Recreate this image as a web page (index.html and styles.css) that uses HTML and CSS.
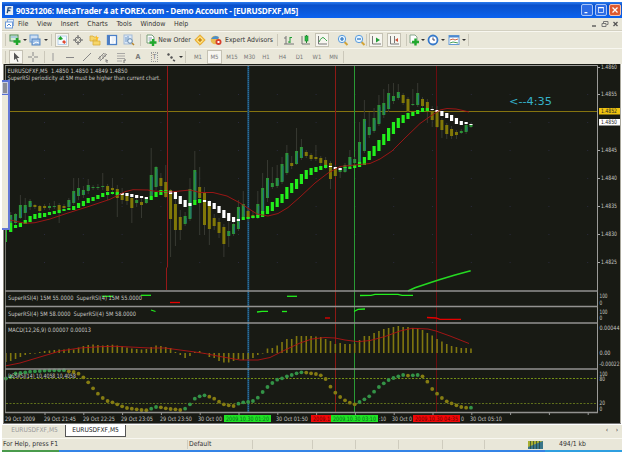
FILE: index.html
```
<!DOCTYPE html>
<html lang="en">
<head>
  <meta charset="UTF-8">
  <title>90321206: MetaTrader 4 at FOREX.com</title>
  <link rel="stylesheet" href="styles.css">
</head>
<body>

  <div class="window">
    <!-- Title Bar -->
    <div class="title-bar">
      <svg class="app-logo" viewBox="0 0 10 11"><rect width="9" height="10" y=".5" fill="#e8eef4"/><path d="M7 2.500H3.500L2.500 8.500M3 5.500H6" stroke="#234a78" stroke-width="1.500" fill="none"/></svg>
      <span class="title">90321206: MetaTrader 4 at FOREX.com - Demo Account - [EURUSDFXF,M5]</span>
      <div class="window-buttons">
        <svg class="win-btn" viewBox="0 0 12 12"><path d="M3 9H6.500" stroke="#fff" stroke-width="1.500"/></svg>
        <svg class="win-btn" viewBox="0 0 12 12"><rect x="3" y="3" width="6" height="6" fill="none" stroke="#dce8ff"/><path d="M3 3H9" stroke="#fff" stroke-width="1.500"/></svg>
        <svg class="win-btn close" viewBox="0 0 12 12"><path d="M3 3L9 9M9 3L3 9" stroke="#fff" stroke-width="1.500"/></svg>
      </div>
    </div>

    <!-- Menu -->
    <div class="menu-bar">
      <svg class="doc-icon" viewBox="0 0 10 10"><rect x="2.500" y=".5" width="6" height="6" fill="#e4f0ff" stroke="#8aabdb"/><rect x=".5" y="3" width="7" height="6" fill="#fff" stroke="#6c9ad8"/><path d="M2 7L4 5L6 7" stroke="#4a86d0" fill="none"/></svg>
      <span>File</span><span>View</span><span>Insert</span><span>Charts</span><span>Tools</span><span>Window</span><span>Help</span>
      <svg class="mdi-buttons" viewBox="0 0 31 8"><path d="M2 6H6" stroke="#444" stroke-width="1.200"/><path d="M13.500 4V1.500H18V4.500H16.500M12 3.500H16V6.500H12Z" stroke="#777" fill="none"/><path d="M23.500 2L27.500 6M27.500 2L23.500 6" stroke="#555" stroke-width="1.300"/></svg>
    </div>

    <!-- Main Toolbar -->
    <div class="toolbar main-tools">
      <i class="grip"></i>
      <svg viewBox="0 0 12 12"><rect x="1" y="1" width="8" height="6" fill="#d7ead9" stroke="#4a8b55"/><path d="M2 3H8" stroke="#7badd9"/><path d="M8 4V11M4.500 7.500H11.500" stroke="#1fa52b" stroke-width="2.500"/></svg>
      <i class="arrow"></i>
      <svg viewBox="0 0 12 12"><rect x="1" y="1" width="8" height="7" fill="#cfe0f4" stroke="#6f9ed2"/><rect x="3" y="5" width="8" height="6" fill="#9fc1e8" stroke="#5584c0"/><path d="M4 10L7 8L10 9" stroke="#fff" fill="none"/></svg>
      <i class="arrow"></i>
      <i class="sep"></i>
      <svg class="pressed" viewBox="0 0 12 12"><rect x="2" y="2" width="8.500" height="8.500" fill="#f5faff" stroke="#a9c6e6" stroke-width=".8"/><path d="M2 5L4.500 2L7 5L4.500 6Z" fill="#1ba32a"/><path d="M6 8L8 6L10 8L8.500 10Z" fill="#e04a32"/></svg>
      <svg viewBox="0 0 12 12"><circle cx="6" cy="6" r="3" fill="none" stroke="#777"/><path d="M6 1V5M6 7V11M1 6H5M7 6H11" stroke="#666"/></svg>
      <svg viewBox="0 0 12 12"><path d="M1 2H4L5 3H8V7H1ZM4 6H7L8 7H11V11H4Z" fill="#f6d66a" stroke="#d9ad3a" stroke-width=".8"/><path d="M7 1L8 3L10 3.500L8.500 5L9 7L7 6" fill="#ffbf27"/></svg>
      <svg viewBox="0 0 12 12"><rect x="1.500" y="1.500" width="9" height="9" fill="#fff" stroke="#4b80c8" stroke-width="1.300"/><path d="M3 2V10" stroke="#3d70bb" stroke-width="1.800"/><path d="M5.500 4H9M5.500 6H9M5.500 8H8" stroke="#c5d5e9" stroke-width=".6"/></svg>
      <svg viewBox="0 0 12 12"><rect x="1" y="1" width="8" height="9" fill="#dce8f6" stroke="#a3bcd9"/><path d="M3 3V8M5 2V7" stroke="#719ac9"/><circle cx="7" cy="7" r="2.300" fill="#e9f6ff" stroke="#6485aa"/><path d="M9 9L11 11" stroke="#b9862a" stroke-width="1.500"/></svg>
      <i class="sep"></i>
      <svg viewBox="0 0 12 12"><path d="M2 1H7L9 3V9H2Z" fill="#fff" stroke="#769d77"/><path d="M3.500 4H7M3.500 6H6" stroke="#8b9ba9"/><path d="M8 5V12M4.500 8.500H11.500" stroke="#20a82d" stroke-width="2.400"/></svg>
      <span class="label">New Order</span>
      <svg viewBox="0 0 12 12"><path d="M6 .8L11.200 6L6 11.200L.8 6Z" fill="#f9c94a" stroke="#e3a837"/><circle cx="6" cy="6" r="2.200" fill="none" stroke="#fff0b0"/><path d="M6 4V8M4 6H8" stroke="#b8740b"/></svg>
      <svg viewBox="0 0 12 12"><circle cx="5" cy="6" r="4.300" fill="#e9bd52"/><path d="M1 5Q4 0 9 3L8 5Z" fill="#4c8fca"/><circle cx="8.500" cy="8" r="3" fill="#d8402d"/><rect x="7.500" y="7" width="2" height="2" fill="#fff"/></svg>
      <span class="label">Expert Advisors</span>
      <i class="sep"></i>
      <svg viewBox="0 0 12 12"><path d="M3 2V10H11M1 4H3M1 10H3" stroke="#777" fill="none"/><path d="M7 3V9M7 3.500H9M5 8H7" stroke="#1c9d31"/></svg>
      <svg viewBox="0 0 12 12"><path d="M3 2V10H11" stroke="#777" fill="none"/><path d="M7.500 1V9" stroke="#247e32"/><rect x="6" y="2" width="3" height="5" fill="#29b843" stroke="#16852b" stroke-width=".6"/></svg>
      <svg class="pressed" viewBox="0 0 12 12"><path d="M2.500 2V10H11" stroke="#777" fill="none"/><path d="M3 8Q6 2 8 4T11 7" stroke="#37a548" fill="none"/></svg>
      <svg viewBox="0 0 12 12"><path d="M7.500 8L10.500 11" stroke="#d4a436" stroke-width="2"/><circle cx="5" cy="5" r="3.700" fill="#e6f5ff" stroke="#5a9bdc"/><path d="M5 3V7M3 5H7" stroke="#236ec0" stroke-width="1.200"/></svg>
      <svg viewBox="0 0 12 12"><path d="M7.500 8L10.500 11" stroke="#d4a436" stroke-width="2"/><circle cx="5" cy="5" r="3.700" fill="#e6f5ff" stroke="#5a9bdc"/><path d="M3 5H7" stroke="#236ec0" stroke-width="1.200"/></svg>
      <i class="sep"></i>
      <svg class="pressed" viewBox="0 0 12 12"><path d="M2.500 2V10H11" stroke="#777" fill="none"/><path d="M6 3.500L10 6L6 8.500Z" fill="#249d37"/></svg>
      <svg class="pressed" viewBox="0 0 12 12"><path d="M2.500 2V10H11M6.500 2V9" stroke="#777" fill="none"/><path d="M7 6L10 4V8Z" fill="#d14e35"/></svg>
      <i class="sep"></i>
      <svg viewBox="0 0 12 12"><path d="M2 1H7L9 3V9H2Z" fill="#fff" stroke="#88a58b"/><path d="M7.500 4.500V11.500M4 8H11" stroke="#21a82e" stroke-width="2.400"/></svg>
      <i class="arrow"></i>
      <svg viewBox="0 0 12 12"><circle cx="6" cy="6" r="4.500" fill="#fff" stroke="#3679ca" stroke-width="1.800"/><path d="M6 3.500V6H8" stroke="#446" fill="none"/></svg>
      <i class="arrow"></i>
      <svg viewBox="0 0 12 12"><rect x="1" y="1.500" width="10" height="9" fill="#fff" stroke="#679bd6"/><path d="M1 2.500H11" stroke="#4c88cf" stroke-width="2"/><path d="M2 6L5 5L7 6L10 5" stroke="#c86645" fill="none"/><path d="M2 9L5 8L10 9" stroke="#45a05a" fill="none"/></svg>
      <i class="arrow"></i>
      <i class="edge"></i>
    </div>

    <!-- Line Studies and Periods -->
    <div class="toolbar line-tools">
      <i class="grip"></i>
      <svg class="pressed" viewBox="0 0 12 12"><path d="M4 1.500V9L6 7.500L7.500 11L8.500 10.500L7 7H9.500Z" fill="#555"/></svg>
      <svg viewBox="0 0 12 12"><path d="M6 1V5M6 7V11M1 6H5M7 6H11" stroke="#888"/></svg>
      <i class="sep"></i>
      <svg viewBox="0 0 12 12"><path d="M6 2V10" stroke="#999"/></svg>
      <svg viewBox="0 0 12 12"><path d="M2 6.500H10" stroke="#888"/></svg>
      <svg viewBox="0 0 12 12"><path d="M2 10L10 2" stroke="#888"/></svg>
      <svg viewBox="0 0 12 12"><path d="M1 8L7 2M3 10L10 3M3 5V9M6 4V8M8 2V6M9 8V11H11M9 9.500H11" stroke="#777" stroke-width=".8" fill="none"/></svg>
      <svg viewBox="0 0 12 12"><path d="M2 2.500H10M2 5H10M2 7.500H10M2 10H7" stroke="#999" stroke-width=".8"/><path d="M9 9V12M9 9H11" stroke="#777" fill="none"/></svg>
      <span class="tool-text">A</span>
      <span class="tool-text"><b class="text-box">T</b></span>
      <svg viewBox="0 0 12 12"><path d="M2 3L4 2L5 4L3 5ZM5 6L7 5L8 7L6 8Z" fill="#555"/><path d="M8 9L10 10" stroke="#555" stroke-width="1.500"/></svg>
      <i class="arrow"></i>
      <i class="sep"></i>
      <span>M1</span><span class="pressed">M5</span><span>M15</span><span>M30</span><span>H1</span><span>H4</span><span>D1</span><span>W1</span><span>MN</span>
      <i class="edge"></i>
    </div>

    <!-- Chart -->
    <div class="chart-area">
      <svg id="chart" viewBox="3 64 618 360"></svg>
      <div class="floating-panel"><div class="panel-head"></div></div>
    </div>

    <!-- Chart Tabs -->
    <div class="tabs">
      <span class="tab">EURUSDFXF,M5</span>
      <span class="tab active">EURUSDFXF,M5</span>
      <span class="tab-scroll">‹</span><span class="tab-scroll">›</span>
    </div>

    <!-- Status Bar -->
    <div class="status-bar">
      <span>For Help, press F1</span>
      <span>Default</span>
      <span></span><span></span><span></span><span></span><span></span>
      <span class="connection">
        <svg viewBox="0 0 15 8"><rect width="15" height="8" fill="#39758a"/><path d="M0 0H15L0 6Z" fill="#a7ae31"/><path d="M2.500 0V8M5.500 0V8M8.500 0V8M11.500 0V8" stroke="#263f35" stroke-width=".7"/></svg>
        494/1 kb
      </span>
    </div>
    <div class="taskbar"><i class="start"></i><i class="tray"></i></div>
  </div>

  <script src="chart.js"></script>
</body>
</html>
```
FILE: styles.css
```
/* Basic Reset */
* {
  margin: 0;
  padding: 0;
  box-sizing: border-box;
}

body {
  width: 625px;
  height: 452px;
  overflow: hidden;
  background: #fff;
  font-family: "DejaVu Sans Condensed", "DejaVu Sans", sans-serif;
  font-stretch: condensed;
  font-size: 7px;
  color: #333;
}

.window {
  width: 620px;
  height: 450px;
  margin: 2px 0 0 2px;
  background: #e9e7d9;
  display: flex;
  flex-direction: column;
}

.window > div {
  flex: none;
}

/* Title Bar */
.title-bar {
  height: 16px;
  background: linear-gradient(#2c7df0, #0a50cb 20%, #0b5ce0 70%, #0b62f0);
  display: flex;
  align-items: center;
  padding: 0 1px 0 3px;
}

.app-logo {
  width: 9px;
  height: 11px;
  margin-right: 2px;
}

.title {
  font-family: "Open Sans", sans-serif;
  font-stretch: normal;
  font-size: 8.2px;
  letter-spacing: -0.22px;
  font-weight: bold;
  color: #fff;
  white-space: nowrap;
}

.window-buttons {
  margin-left: auto;
  display: flex;
  gap: 2px;
}

.win-btn {
  width: 12px;
  height: 12px;
  background: #2e6ce4;
  border: 1px solid #a9c4f7;
  border-radius: 2px;
}

.win-btn.close {
  background: #df5a30;
  border-color: #f6c4b0;
}

/* Menu */
.menu-bar {
  height: 13px;
  display: flex;
  align-items: center;
  padding: 0 1px 0 3px;
  border-bottom: 1px solid #d3d0c1;
  font-size: 7px;
}

.menu-bar span {
  margin-right: 8.6px;
}

.doc-icon {
  width: 10px;
  height: 10px;
  margin-right: 3px;
}

.mdi-buttons {
  width: 31px;
  height: 8px;
  margin-left: auto;
}

/* Toolbars */
.toolbar {
  display: grid;
  align-items: center;
  justify-items: center;
  border-top: 1px solid #f8f7f0;
  white-space: nowrap;
}

.main-tools {
  height: 17px;
  grid-template-columns: 6px 14px 5px 16px 5px 7px 13px 20px 14px 20px 14px 8px 13px 35px 15px 17px 50px 7px 15px 18px 16px 25px 9px 5px 14px 22px 3px 12px 6px 14px 6px 15px 6px 3px;
}

.line-tools {
  height: 16px;
  grid-template-columns: 6px 15px 19px 5px 12px 22px 12px 20px 16px 18px 15px 17px 3px 7px 18px 15px 20px 15px 18px 15px 19px 16px 17px 3px;
  font-size: 6px;
  color: #777;
}

.toolbar svg {
  width: 12px;
  height: 12px;
  overflow: visible;
}

.toolbar .pressed {
  background: #f7f6f0;
  outline: 1px solid #c5c2b4;
}

.line-tools span.pressed {
  width: 13px;
  height: 12px;
  line-height: 12px;
  text-align: center;
}

.label {
  font-size: 6.8px;
}

.grip,
.sep,
.edge {
  width: 1px;
  height: 12px;
  background: #cbc8ba;
}

.arrow {
  border: 2px solid transparent;
  border-top-color: #333;
  border-bottom: 0;
}

.tool-text {
  font-size: 7px;
  font-weight: bold;
}

.text-box {
  border: 1px dotted #999;
  padding: 0 1px;
  font-weight: normal;
}

/* Chart */
.chart-area {
  position: relative;
  height: 360px;
  padding-left: 1px;
  background: #fff;
}

#chart {
  display: block;
  width: 618px;
  height: 360px;
  background: #181a14;
}

#chart text {
  font-family: "DejaVu Sans Condensed", "DejaVu Sans", sans-serif;
  font-stretch: condensed;
  font-size: 6px;
  fill: #c8c8c4;
}

#chart .time-note {
  font-family: "DejaVu Sans", sans-serif;
  font-stretch: normal;
  font-size: 10px;
  fill: #35b1c9;
}

#chart .dark {
  fill: #222;
}

#chart .on-green {
  fill: #0b6a20;
}

#chart .on-red {
  fill: #6b0000;
}

/* Edge of the docked panel over the chart */
.floating-panel {
  position: absolute;
  left: 0;
  top: 16px;
  width: 8px;
  height: 150px;
  background: #eceadb;
  border-right: 2px solid #6579d6;
  border-bottom: 2px solid #6579d6;
}

.panel-head {
  width: 6px;
  height: 15px;
  background: #7089de;
  border: solid #5670d4;
  border-width: 2px 1px 2px 0;
}

.panel-head::after {
  content: "";
  display: block;
  width: 4px;
  height: 10px;
  background: #8b8d94;
  border: 1px solid #c9cede;
}

/* Chart Tabs */
.tabs {
  height: 14px;
  display: flex;
  align-items: flex-start;
  border-top: 1px solid #fff;
  padding-left: 2px;
  font-size: 6.6px;
  line-height: 11px;
}

.tab {
  width: 61px;
  height: 12px;
  text-align: center;
  color: #999;
}

.tab.active {
  background: #fff;
  border: solid #555;
  border-width: 0 1px 1px 1px;
  color: #222;
}

.tab-scroll {
  width: 10px;
  text-align: center;
}

.tab.active + .tab-scroll {
  margin-left: auto;
}

/* Status Bar */
.status-bar {
  height: 12px;
  display: grid;
  grid-template-columns: 186px 65px 60px 43px 43px 44px 42px 1fr;
  align-items: center;
  border-top: 1px solid #f8f7f0;
  font-size: 6.8px;
}

.status-bar > span {
  height: 9px;
  line-height: 9px;
  padding-left: 1px;
  border-right: 1px solid #cfccbe;
  white-space: nowrap;
}

.status-bar > .connection {
  display: flex;
  align-items: center;
  gap: 16px;
  padding-left: 43px;
  border: 0;
}

.connection svg {
  width: 15px;
  height: 8px;
}

/* Taskbar */
.taskbar {
  height: 2px;
  display: flex;
  justify-content: space-between;
  background: #3483e6;
}

.start {
  width: 57px;
  background: #4a9b4c;
}

.tray {
  width: 77px;
  background: #2f9fe0;
}
```
FILE: chart.js
```
const GREEN = '#2c9238', OLIVE = '#817808', LIME = '#22ee1c';

// high, low, body top, body bottom, rising, average top, average bottom, average colour (g/w)
const bars = [
  [212,232,215,223,1,223,232,'g'], [213,226,214,223,1,225,228,'g'], [195,219,205,218,1,223,227,'g'],
  [198,220,205,213,1,220,224,'g'], [199,210,201,207,1,216,222,'g'], [204,209,205,207,0,214,219,'g'],
  [205,213,206,211,0,213,218,'g'], [204,210,206,208,0,213,217,'g'], [203,210,206,208,1,212,215,'g'],
  [201,209,206,207,1,211,214,'g'], [203,223,205,210,0,210,213,'g'], [204,210,206,208,0,209,211,'g'],
  [198,209,200,207,1,208,210,'g'], [178,205,191,203,1,206,210,'g'], [178,200,188,196,1,203,208,'g'],
  [186,198,190,195,1,201,206,'g'], [179,194,185,191,1,198,203,'g'], [185,190,187,188,1,197,201,'g'],
  [184,190,187,188,1,195,199,'g'], [173,190,186,187,1,193,197,'g'], [184,200,186,191,0,192,195,'g'],
  [178,195,188,190,0,192,194,'g'], [185,217,189,198,0,192,195,'g'], [188,204,193,200,0,193,195,'w'],
  [194,205,196,201,0,193,196,'w'], [195,223,198,208,0,194,197,'w'], [197,207,200,203,1,195,198,'w'],
  [198,218,202,205,0,196,198,'w'], [198,204,199,203,1,197,199,'w'], [148,198,175,196,1,196,200,'g'],
  [166,190,167,187,1,192,197,'g'], [173,192,178,186,0,190,195,'g'], [165,198,182,197,0,190,193,'g'],
  [189,257,190,219,0,191,194,'w'], [196,246,204,230,0,192,199,'w'], [210,240,217,230,0,196,204,'w'],
  [212,226,216,224,1,200,207,'w'], [178,221,189,219,1,203,206,'w'], [151,205,170,201,1,200,205,'g'],
  [167,235,187,198,0,199,203,'g'], [187,235,193,225,0,200,202,'w'], [200,245,202,229,0,201,206,'w'],
  [214,230,218,226,0,203,209,'w'], [218,238,222,233,0,206,213,'w'], [224,257,227,244,0,210,218,'w'],
  [215,247,231,236,1,213,221,'w'], [219,236,224,234,1,217,222,'w'], [200,231,207,229,1,219,221,'w'],
  [191,218,204,217,1,217,220,'g'], [208,222,211,218,0,217,219,'g'], [211,219,215,218,0,216,218,'g'],
  [191,219,204,216,1,215,218,'g'], [173,214,188,212,1,211,217,'g'], [160,202,178,198,1,206,214,'g'],
  [167,189,183,187,1,202,211,'g'], [165,188,178,186,1,198,207,'g'], [157,184,164,182,1,194,203,'g'],
  [145,175,153,173,1,187,199,'g'], [156,169,163,166,0,183,193,'g'], [128,165,151,164,1,179,189,'g'],
  [139,160,147,158,1,174,184,'g'], [150,158,152,156,0,170,179,'g'], [153,161,155,159,0,168,175,'g'],
  [145,161,157,159,0,167,172,'g'], [156,166,158,163,0,166,170,'g'], [157,169,160,166,0,165,168,'g'],
  [161,189,163,179,0,166,167,'w'], [165,177,168,176,0,167,169,'w'], [166,178,169,172,1,168,170,'w'],
  [163,173,165,172,1,167,168,'g'], [150,169,157,167,1,167,169,'g'], [157,168,159,163,1,165,168,'g'],
  [122,164,142,162,1,162,167,'g'], [100,153,119,151,1,157,165,'g'], [112,138,127,135,1,151,160,'g'],
  [108,133,118,131,1,146,156,'g'], [95,126,105,124,1,140,151,'g'], [89,118,103,115,1,134,145,'g'],
  [84,112,93,109,1,128,141,'g'], [83,104,96,101,1,122,134,'g'], [84,100,92,98,1,118,128,'g'],
  [93,105,95,103,0,115,123,'g'], [97,113,99,111,0,113,119,'g'], [89,106,104,105,1,112,116,'g'],
  [83,107,93,105,1,110,114,'g'], [97,112,99,106,0,108,112,'g'], [99,123,102,112,0,108,111,'g'],
  [106,127,111,120,0,109,110,'w'], [106,128,112,127,0,110,112,'w'], [118,138,120,130,0,111,116,'w'],
  [123,139,125,134,0,113,118,'w'], [126,139,129,136,0,115,121,'w'], [130,139,132,135,0,118,124,'w'],
  [129,134,131,133,1,121,125,'w'], [122,134,125,132,1,122,124,'w'], [123,128,125,127,1,124,125,'w']
];

// histogram heights, first value is the bar cut by the left edge
const macd = [-9,-8,-6,-4,-2,-1,0,1,2,2.5,3,3.5,3.5,4.5,3.5,5.5,7,8,8.5,8,7.5,8,8.3,7.5,6.5,5.5,4.5,4,3.5,4,6,
  7.5,7,6,5,1,-2,-5,-3,1,2,0,-4,-5,-8,-9.5,-9.5,-8,-6,-7,-6,-5,-2,0,4.5,5,7.5,11,14,14,17,17,17,17,16.5,16,
  14,12,9,10,9,9,9.5,13,17,17,20,22,24,25,26,27,26,26,25,24.5,23,20,17.5,14,11.5,9,7,6,5,5,4.5];

const rsi = [378.5,376.7,373.5,373,372.3,371.7,371.3,371,370.6,370.4,370.3,370.3,370.2,371.3,372,373.7,377.3,382.3,
  388.3,393.7,398,401,402.3,404.3,406.3,408,408.7,409.3,410,410.2,408.7,407,407.3,408.3,409,409.3,410,408.7,404.3,
  398.7,396.3,395.3,396.7,398.7,401.7,404.3,405.3,406,403.7,402.3,402,401,397.7,392,387,383,379.7,378.3,376.3,375,
  373.3,372.3,372.6,373.3,374,375.3,379,386.7,392.7,397,400.3,402.7,404.3,402,399.3,396.3,391.7,387,383.3,380,378,
  376.3,375,375.6,375.3,375,376.3,381.7,389,393.7,398,401.3,403.3,405.3,407,407.7,407.7];

let out = '';
const x = i => 10.7 + i * 4.845;
const rect = (l, t, w, h, c) => out += `<rect x="${l}" y="${t}" width="${w}" height="${h}" fill="${c}"/>`;
const line = (p, c, w = 1, extra = '') => out += `<polyline points="${p}" fill="none" stroke="${c}" stroke-width="${w}" ${extra}/>`;
const text = (s, l, y, w, cls = '') => out += `<text x="${l}" y="${y}" textLength="${w}" lengthAdjust="spacingAndGlyphs" class="${cls}">${s}</text>`;

// faint grid dots
for (let gx = 44; gx < 597; gx += 38.8)
  for (let gy = 94; gy < 290; gy += 28) rect(gx, gy, 1, 1, '#2b2b3c');

// cursor levels and vertical lines
line('9,111.5 597,111.5', '#85740f');
line('167.500,66 167.500,267 166.500,268 166.500,290', '#951818');
line('248.300,66 248.300,412', '#1d4a6b', 2);
line('248.300,66 248.300,412', '#2f7cab', 1, 'stroke-dasharray="1 1"');
line('335.500,66 335.500,412', '#8c1a16');
line('354.500,66 354.500,412', '#2a9a35');
line('436.500,66 436.500,412', '#6a0c10');

// candles
rect(5, 225, 2, 17, '#25b52a');
rect(5, 242, 1, 8, '#555');
bars.forEach((b, i) => {
  const c = b[4] ? GREEN : OLIVE;
  rect(x(i) - .5, b[0], 1, b[1] - b[0], '#373932');
  rect(x(i) - 1.5, b[2], 3, b[3] - b[2], c);
  if (b[4] && b[3] - b[2] > 4) rect(x(i) + .6, b[2] + 2, .8, b[3] - b[2] - 3, '#20688b');
});
bars.forEach((b, i) => rect(x(i) - 1.6, b[5], 3.2, b[6] - b[5], b[7] == 'g' ? LIME : '#fff'));
line('5,218 10,220 25,223.3 35,222.7 50,219 67,213.3 90,206 110,199.3 125,191.7 133,189.7 148,190 153,191 170,192 190,190 200,192.500 213,192.500 227,196 240,203 250,209.500 257,214 268,216 278,213.500 288,207.500 300,197 315,183 328,173 340,166.500 355,165 370,163.500 380,159 392,151 405,138 420,123.500 430,116.500 440,110 447,108.500 456,109 463,110.500 469,112', '#a81515', .9);
line('408,291 415,287.700 430,282.700 440,279.500 455,275 470.700,270.700', '#25d822', 1.6);

// indicator windows
[['102,296.3 113,296.3', 1], ['141,295.3 151,295.3', 1], ['170,302.5 180,302.5', 0], ['287,296.3 297,296.3', 1],
 ['360,295.500 371,295.300 375,294.400 398,294.400 402,295.400 413,295.400', 1], ['151,310 155.500,311.500', 1],
 ['257,312 262,311.400 268,311.400', 1], ['282,311.500 287,311.500', 1], ['325,318 330,318', 0],
 ['354,311.500 358,309.400 365,309', 1], ['427,317.500 436,318 440,319.400 461,319.400', 0]
].forEach(s => line(s[0], s[1] ? LIME : '#e60000', 1.3));

macd.forEach((v, n) => rect(x(n - 1) - .8, v > 0 ? 353 - v : 353, 1.6, Math.max(Math.abs(v), .6), '#80770f'));
line('5,366 20,363 40,357 60,351 80,348 100,346.700 115,346.300 130,347 150,348 165,348 180,350 195,352 205,353.500 220,356.500 240,360 258,360 270,357.500 285,350 300,343 312,339 325,337.500 335,338 345,340 358,341.700 370,340.500 385,336.500 400,331 412,328.300 428,329 436,331 450,336 469,343.500', '#b01414', .9);

line('6,378.500 597,378.500', '#749016', 1, 'stroke-dasharray="2 1.5"');
line('6,403.500 597,403.500', '#5f701b', 1, 'stroke-dasharray="2 1.5"');
rsi.forEach((y, n) => {
  const up = n == 0 || y <= rsi[n - 1];
  out += `<circle cx="${x(n - 1)}" cy="${y}" r="1.9" fill="${up ? '#339347' : '#857c12'}"/>`;
});

// frame
line('5,65.500 597.500,65.500 597.500,412', '#9b9b98');
line('5.500,66 5.500,412', '#77776f');
[291, 306.5, 323, 369, 412.5].forEach(y => line(`5,${y} 598,${y}`, '#929290', 1.7));
rect(3, 64, 1, 360, '#8d8b82');
rect(620, 64, 1, 360, '#aaa89d');
rect(3, 423, 618, 1, '#777');

text('EURUSDFXF,M5&#160; 1.4850 1.4850 1.4849 1.4850', 7.5, 73, 120);
text('SuperRSI periodicity at 5M must be higher than current chart.', 7.5, 79.5, 153);
text('SuperRSI(4) 15M 55.0000&#160; SuperRSI(4) 15M 55.0000', 8, 300, 134);
text('SuperRSI(4) 5M 58.0000&#160; SuperRSI(4) 5M 58.0000', 8, 316, 128);
text('MACD(12,26,9) 0.00007 0.00013', 8, 331.5, 83);
text('DSSRSI(14) 10.4058 10.4058', 8, 378, 68);
text('&lt;--4:35', 509, 105, 43, 'time-note');

// price scale
[['1.4860', 67], ['1.4855', 94], ['1.4845', 150], ['1.4840', 178], ['1.4835', 206], ['1.4830', 234], ['1.4825', 262]]
  .forEach(([s, y]) => { text(s, 601, y + 2.3, 16); rect(598, y, 2, 1, '#aaa'); });
rect(599, 108, 21, 6.5, '#f0c410');
text('1.4852', 601, 113.4, 16, 'dark');
rect(599, 119, 21, 6.5, '#fff');
text('1.4850', 601, 124.4, 16, 'dark');
[['100', 296, 8], ['0', 302.5, 2.7], ['100', 312, 8], ['0', 318, 2.7], ['0.00044', 327.7, 20], ['0.00', 353, 11],
 ['-0.00022', 364, 20], ['100', 373.5, 8], ['80', 378.8, 5.5], ['20', 403.2, 5.5], ['0', 409, 2.7]]
  .forEach(([s, y, w]) => text(s, 599.5, y + 2.2, w));

// time scale
[['29 Oct 2009', 5, 30], ['29 Oct 21:45', 44, 32], ['29 Oct 22:25', 83, 32], ['29 Oct 23:05', 121, 32],
 ['29 Oct 23:50', 160, 32], ['30 Oct 00', 198, 24], ['30 Oct 01:50', 276, 32], [':10', 379, 7],
 ['30 Oct 0', 392, 20], ['0', 461, 3], ['30 Oct 05:10', 470, 32]].forEach(([s, l, w]) => text(s, l, 420.8, w));
for (let t = 44.5; t < 597; t += 38.8) rect(t, 413, 1, 2, '#999');

// time marks of the vertical lines
rect(311, 415, 20, 7, '#f00808');
text('2009.1', 313, 420.8, 17, 'on-red');
rect(224, 415, 47, 7, '#20e325');
text('2009.10.30 01:20', 226, 420.8, 43, 'on-green');
rect(331, 415, 47, 7, '#20e325');
text('2009.10.30 03:10', 333, 420.8, 43, 'on-green');
rect(413, 415, 47, 7, '#f00808');
text('2009.10.30 04:35', 415, 420.8, 43, 'on-red');

document.getElementById('chart').innerHTML = out;
```
